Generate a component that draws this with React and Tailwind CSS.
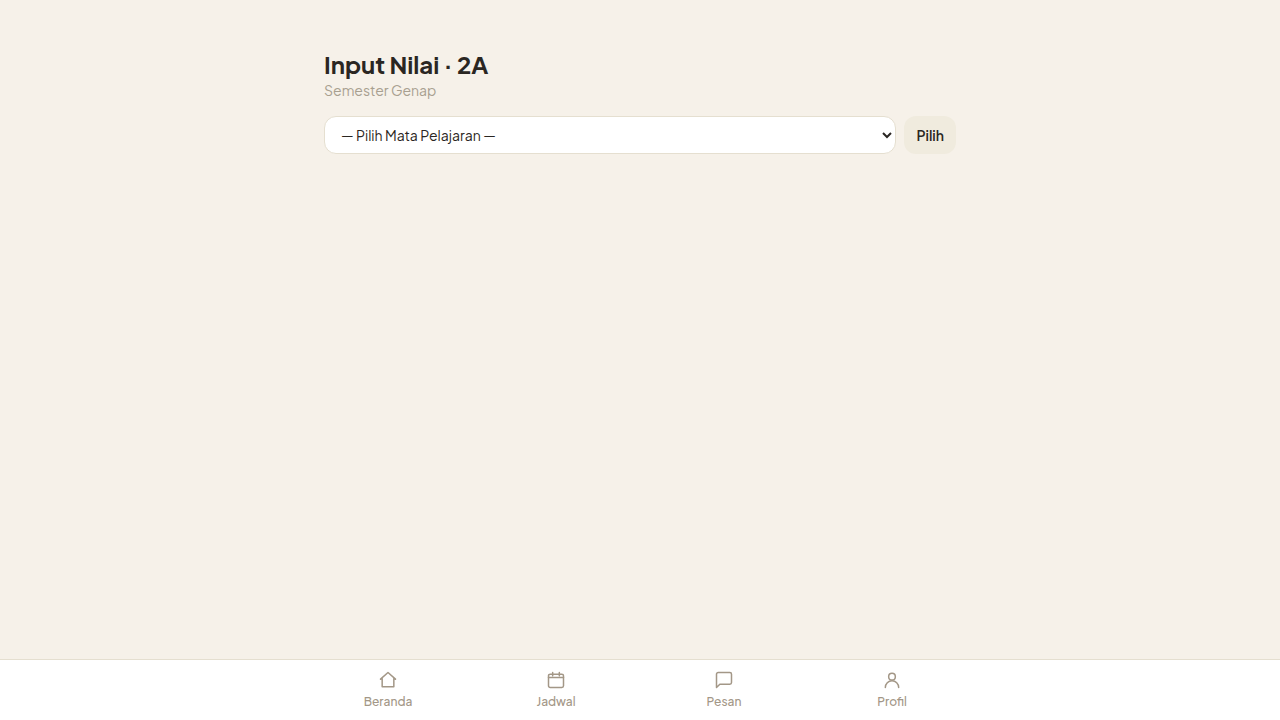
import React, { useState } from 'react';

const navItems = [
  { label: 'Beranda', icon: <path d="M3 11l9-8 9 8M5 9.5V20h14V9.5" /> },
  {
    label: 'Jadwal',
    icon: (
      <>
        <rect x="3" y="5" width="18" height="16" rx="2" />
        <path d="M3 9h18M8 3v4M16 3v4" />
      </>
    ),
  },
  { label: 'Pesan', icon: <path d="M21 15a2 2 0 0 1-2 2H7l-4 4V5a2 2 0 0 1 2-2h14a2 2 0 0 1 2 2z" /> },
  {
    label: 'Profil',
    icon: (
      <>
        <circle cx="12" cy="8" r="4" />
        <path d="M4 21a8 8 0 0 1 16 0" />
      </>
    ),
  },
];

const BottomNav = () => (
  <nav className="sticky bottom-0 border-t border-[#e5dfd0] bg-white">
    <div className="mx-auto grid max-w-2xl grid-cols-4">
      {navItems.map((item) => (
        <a key={item.label} href="#" className="flex flex-col items-center gap-1 py-2.5 text-xs font-medium text-[#a39787]">
          <svg
            className="h-5 w-5"
            viewBox="0 0 24 24"
            fill="none"
            stroke="currentColor"
            strokeWidth="1.8"
            strokeLinecap="round"
            strokeLinejoin="round"
            aria-hidden="true"
          >
            {item.icon}
          </svg>
          {item.label}
        </a>
      ))}
    </div>
  </nav>
);

const App = () => {
  const [mapel, setMapel] = useState('');

  return (
    <div className="flex min-h-screen flex-col bg-[#f6f1e9] font-['Plus_Jakarta_Sans','Inter',sans-serif] text-[#2a2622]">
      <main className="mx-auto w-full max-w-2xl flex-1 px-5 pt-12">
        <h1 className="text-2xl font-bold">Input Nilai · 2A</h1>
        <p className="text-sm text-[#a8a090]">Semester Genap</p>
        <form className="mt-4 flex gap-2" onSubmit={(e) => e.preventDefault()}>
          <select
            aria-label="Mata Pelajaran"
            value={mapel}
            onChange={(e) => setMapel(e.target.value)}
            className="min-w-0 flex-1 rounded-xl border border-[#e5dfd0] bg-white px-3 py-2 text-sm"
          >
            <option value="">— Pilih Mata Pelajaran —</option>
          </select>
          <button type="submit" className="rounded-xl bg-[#f0ebde] px-3 text-sm font-semibold">
            Pilih
          </button>
        </form>
      </main>
      <BottomNav />
    </div>
  );
};

export default App;
